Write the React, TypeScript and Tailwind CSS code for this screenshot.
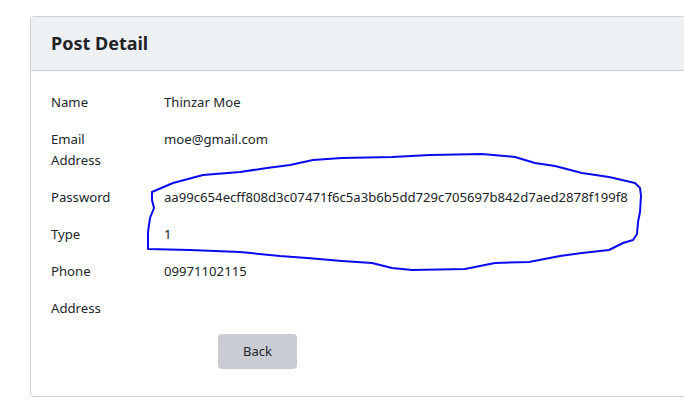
import React from "react";

const rows: [string, string][] = [
  ["Name", "Thinzar Moe"],
  ["Email Address", "moe@gmail.com"],
  ["Password", "aa99c654ecff808d3c07471f6c5a3b6b5dd729c705697b842d7aed2878f199f8"],
  ["Type", "1"],
  ["Phone", "09971102115"],
  ["Address", ""],
];

export default function App() {
  return (
    <div
      className="relative w-[684px] h-[416px] overflow-hidden bg-white text-[#212529]"
      style={{ fontFamily: '"Noto Sans", "Open Sans", sans-serif' }}
    >
      <div className="ml-[30px] mt-[16px] w-[700px] border border-[#cfd3d8] rounded-[4px]">
        <div className="h-[54px] bg-[#eef1f4] border-b border-[#cfd3d8] flex items-center pl-[20px] rounded-t-[4px]">
          <h1 className="text-[18px] font-bold text-[#1f2328]">Post Detail</h1>
        </div>
        <div className="pl-[20px] pt-[21px] pb-[27px]">
          <div className="flex flex-col gap-[16px]">
            {rows.map(([label, value]) => (
              <div key={label} className="flex text-[13.15px] leading-[21px]">
                <div className="w-[113px] pr-[30px] text-[#212529]">{label}</div>
                <div className="text-[#212529]">{value}</div>
              </div>
            ))}
          </div>
          <div className="mt-[15px] pl-[167px]">
            <button className="w-[79px] h-[35px] rounded-[4px] bg-[#c9cdd3] text-[13px] text-[#212529]">
              Back
            </button>
          </div>
        </div>
      </div>
      <svg
        className="absolute left-0 top-0 pointer-events-none"
        width="684"
        height="416"
        viewBox="0 0 684 416"
      >
        <path
          d="M152 192 L173 183 L203 175 L240 172 L267 168 L290 165 L313 160 L342 158 L392 157 L430 155 L482 154 L515 157 L525 160 L535 163 L555 166 L582 173 L609 177 L635 183 L640 188 L641 196 L640 212 L638 222 L637 234 L633 240 L623 243 L609 250 L582 253 L560 256 L529 262 L495 263 L465 269 L412 270 L392 268 L372 263 L342 261 L307 258 L280 256 L240 252 L190 250 L148 249 L148 232 L150 218 L154 208 L152 200 Z"
          fill="none"
          stroke="#0a0aef"
          strokeWidth="2"
          strokeLinejoin="round"
          strokeLinecap="round"
        />
      </svg>
    </div>
  );
}
